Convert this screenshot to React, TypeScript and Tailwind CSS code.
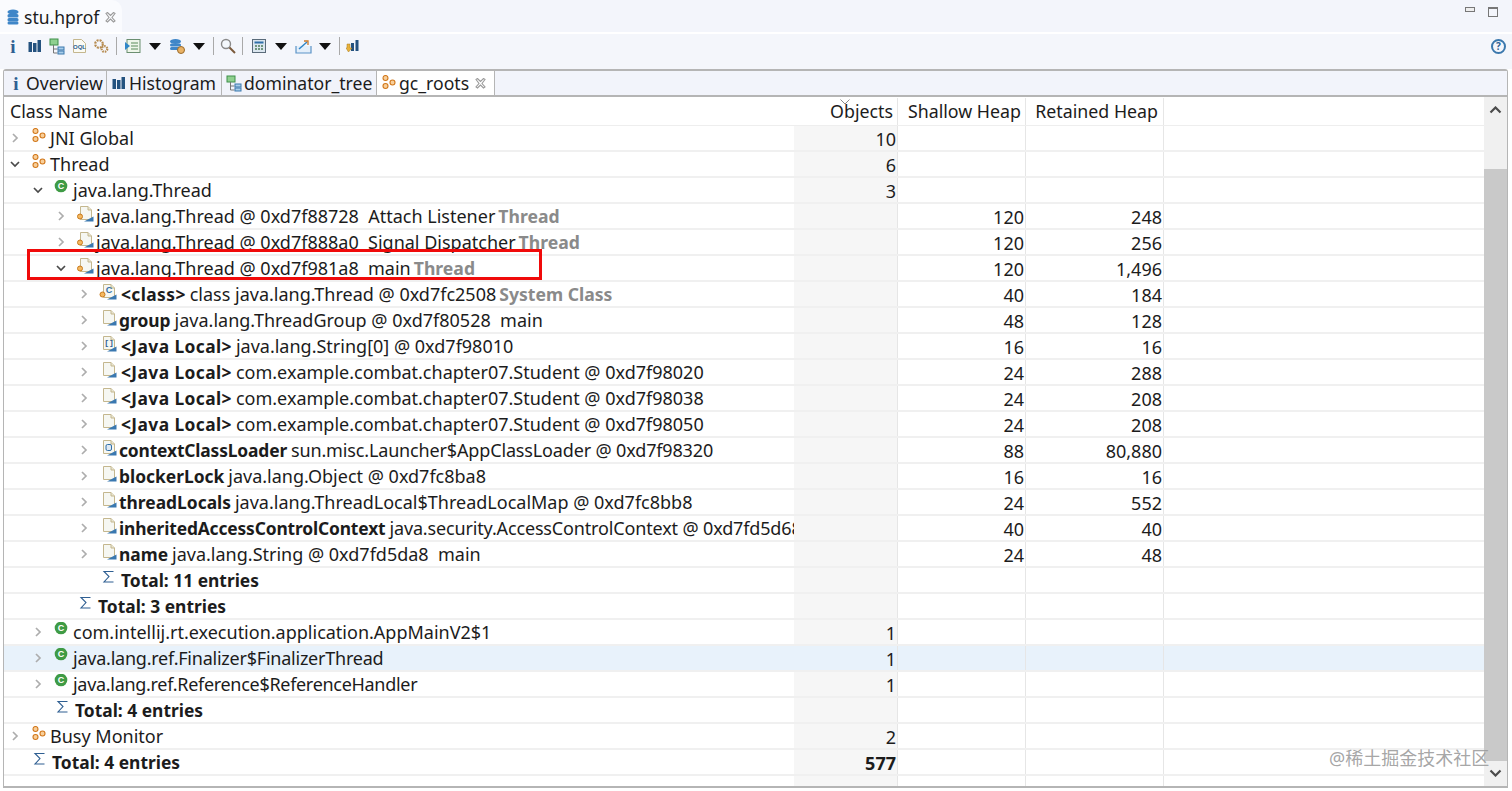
import React from "react";

type IconKind = "roots" | "cls" | "threadObj" | "classObj" | "doc" | "arr" | "loader" | "sum";

type Row = {
  level: number;
  icon: IconKind;
  arrow?: "open" | "closed";
  bold?: string;
  text?: string;
  gray?: string;
  objects?: string;
  shallow?: string;
  retained?: string;
  selected?: boolean;
  total?: boolean;
  track?: string;
};

const INDENT = ["pl-[5px]", "pl-[28px]", "pl-[51px]", "pl-[74px]"];

const rows: Row[] = [
  { level: 0, icon: "roots", arrow: "closed", text: "JNI Global", objects: "10" },
  { level: 0, icon: "roots", arrow: "open", text: "Thread", objects: "6" },
  { level: 1, icon: "cls", arrow: "open", text: "java.lang.Thread", objects: "3" },
  { level: 2, icon: "threadObj", arrow: "closed", text: "java.lang.Thread @ 0xd7f88728  Attach Listener", gray: "Thread", shallow: "120", retained: "248" },
  { level: 2, icon: "threadObj", arrow: "closed", text: "java.lang.Thread @ 0xd7f888a0  Signal Dispatcher", gray: "Thread", shallow: "120", retained: "256" },
  { level: 2, icon: "threadObj", arrow: "open", text: "java.lang.Thread @ 0xd7f981a8  main", gray: "Thread", shallow: "120", retained: "1,496" },
  { level: 3, icon: "classObj", arrow: "closed", bold: "<class>", text: "class java.lang.Thread @ 0xd7fc2508", gray: "System Class", shallow: "40", retained: "184" },
  { level: 3, icon: "doc", arrow: "closed", bold: "group", text: "java.lang.ThreadGroup @ 0xd7f80528  main", shallow: "48", retained: "128" },
  { level: 3, icon: "arr", arrow: "closed", bold: "<Java Local>", text: "java.lang.String[0] @ 0xd7f98010", shallow: "16", retained: "16" },
  { level: 3, icon: "doc", arrow: "closed", bold: "<Java Local>", text: "com.example.combat.chapter07.Student @ 0xd7f98020", shallow: "24", retained: "288" },
  { level: 3, icon: "doc", arrow: "closed", bold: "<Java Local>", text: "com.example.combat.chapter07.Student @ 0xd7f98038", shallow: "24", retained: "208" },
  { level: 3, icon: "doc", arrow: "closed", bold: "<Java Local>", text: "com.example.combat.chapter07.Student @ 0xd7f98050", shallow: "24", retained: "208" },
  { level: 3, icon: "loader", arrow: "closed", bold: "contextClassLoader", text: "sun.misc.Launcher$AppClassLoader @ 0xd7f98320", shallow: "88", retained: "80,880", track: "tracking-[-0.15px]" },
  { level: 3, icon: "doc", arrow: "closed", bold: "blockerLock", text: "java.lang.Object @ 0xd7fc8ba8", shallow: "16", retained: "16" },
  { level: 3, icon: "doc", arrow: "closed", bold: "threadLocals", text: "java.lang.ThreadLocal$ThreadLocalMap @ 0xd7fc8bb8", shallow: "24", retained: "552" },
  { level: 3, icon: "doc", arrow: "closed", bold: "inheritedAccessControlContext", text: "java.security.AccessControlContext @ 0xd7fd5d68", shallow: "40", retained: "40", track: "tracking-[-0.15px]" },
  { level: 3, icon: "doc", arrow: "closed", bold: "name", text: "java.lang.String @ 0xd7fd5da8  main", shallow: "24", retained: "48" },
  { level: 3, icon: "sum", bold: "Total: 11 entries", total: true },
  { level: 2, icon: "sum", bold: "Total: 3 entries", total: true },
  { level: 1, icon: "cls", arrow: "closed", text: "com.intellij.rt.execution.application.AppMainV2$1", objects: "1" },
  { level: 1, icon: "cls", arrow: "closed", text: "java.lang.ref.Finalizer$FinalizerThread", objects: "1", selected: true, track: "tracking-[-0.23px]" },
  { level: 1, icon: "cls", arrow: "closed", text: "java.lang.ref.Reference$ReferenceHandler", objects: "1", track: "tracking-[-0.3px]" },
  { level: 1, icon: "sum", bold: "Total: 4 entries", total: true },
  { level: 0, icon: "roots", arrow: "closed", text: "Busy Monitor", objects: "2" },
  { level: 0, icon: "sum", bold: "Total: 4 entries", objects: "577", total: true },
  {} as Row,
];

function Doc() {
  return (
    <>
      <path d="M4.500 0.500h7.500l3.500 3.500v9.500h-11z" fill="#f6f7f2" stroke="#c4b78e" />
      <path d="M12 0.500v3.500h3.500" fill="#e9e6d2" stroke="#c4b78e" />
      <path d="M8 15.500h9.500v-5z" fill="#3a78b0" />
    </>
  );
}

function Icon({ kind }: { kind: IconKind }) {
  if (kind === "roots") {
    return (
      <svg width="16" height="16" viewBox="0 0 16 16" fill="#f8cf9a" stroke="#d2781c" strokeWidth="1.1">
        <circle cx="4.500" cy="3" r="2.500" />
        <circle cx="4.500" cy="11" r="2.500" />
        <circle cx="11.500" cy="7.500" r="2.500" />
      </svg>
    );
  }
  if (kind === "cls") {
    return (
      <svg width="16" height="16" viewBox="0 0 16 16">
        <circle cx="7" cy="6" r="6.300" fill="#3f9b45" />
        <text x="7" y="9" textAnchor="middle" fontSize="9" fontWeight="700" fill="#fff" fontFamily="Liberation Sans, sans-serif">C</text>
      </svg>
    );
  }
  if (kind === "sum") {
    return (
      <svg width="16" height="16" viewBox="0 0 16 16" fill="none" stroke="#2f5f92" strokeWidth="1.100">
        <path d="M12.500 1.500H3L8 6.500l-5 5.500h9.500" />
      </svg>
    );
  }
  return (
    <svg width="18" height="16" viewBox="0 0 18 16">
      <Doc />
      {kind === "threadObj" && <circle cx="4" cy="10.500" r="2.500" fill="#f4b860" stroke="#c97a1c" />}
      {kind === "classObj" && (
        <>
          <text x="10" y="9" textAnchor="middle" fontSize="9" fontWeight="700" fill="#2f6fa8" fontFamily="Liberation Sans, sans-serif">C</text>
          <circle cx="3.500" cy="10.500" r="2.500" fill="#f4b860" stroke="#c97a1c" />
        </>
      )}
      {kind === "arr" && (
        <text x="10" y="9" textAnchor="middle" fontSize="8" fontWeight="700" fill="#2f5f92" fontFamily="Liberation Mono, monospace">[]</text>
      )}
      {kind === "loader" && <rect x="7" y="4.500" width="5.500" height="6" rx="1.500" fill="#dfe9f3" stroke="#2f6fa8" />}
    </svg>
  );
}

function Chevron({ open }: { open: boolean }) {
  return (
    <svg width="12" height="12" viewBox="0 0 12 12" fill="none" strokeWidth="1.700" stroke={open ? "#4a4a4a" : "#adadad"}>
      {open ? <path d="M2 4l4 4 4-4" /> : <path d="M4 2l4 4-4 4" />}
    </svg>
  );
}

function TreeRow({ row }: { row: Row }) {
  const bg = row.selected ? "bg-[#e8f2fb]" : "";
  const cell = "border-r border-[#e6e6e6] text-right pr-[1px]";
  const angled = row.bold?.startsWith("<");
  return (
    <div className={`flex h-[26px] shrink-0 items-center border-b-2 border-[#f0f0f0] ${bg}`}>
      <div className={`flex h-full w-[790px] shrink-0 items-center overflow-hidden whitespace-nowrap ${INDENT[row.level ?? 0]}`}>
        <span className="flex w-[12px] shrink-0 items-center">
          {row.arrow && <Chevron open={row.arrow === "open"} />}
        </span>
        {row.icon && (
          <span className={`mb-[5px] ml-[7px] flex shrink-0 justify-center ${row.total ? "w-[24px]" : "w-[22px]"}`}>
            <Icon kind={row.icon} />
          </span>
        )}
        <span className={`whitespace-pre ${row.track ?? ""}`}>
          {row.bold && (
            <span className={`mr-[4px] text-[17.4px] font-bold ${angled ? "ml-[2px] tracking-[0.4px]" : ""}`}>{row.bold}</span>
          )}
          {row.text}
          {row.gray && <span className="ml-[3px] text-[17.6px] font-bold text-[#8a8a8a]">{row.gray}</span>}
        </span>
      </div>
      <div className={`h-full w-[104px] shrink-0 ${cell} ${row.selected ? "" : "bg-[#f6f6f6]"} ${row.total ? "font-bold" : ""}`}>{row.objects}</div>
      <div className={`h-full w-[128px] shrink-0 ${cell}`}>{row.shallow}</div>
      <div className={`h-full w-[138px] shrink-0 ${cell}`}>{row.retained}</div>
    </div>
  );
}

function TabIcon({ kind }: { kind: "info" | "bars" | "tree" | "roots" }) {
  if (kind === "info") {
    return <span className="w-[10px] text-center font-['Liberation_Serif',serif] text-[19px] font-bold leading-none text-[#2f5f92]">i</span>;
  }
  if (kind === "bars") return <Bars />;
  if (kind === "tree") return <TreeIcon />;
  return <Icon kind="roots" />;
}

function Bars() {
  return (
    <svg width="14" height="14" viewBox="0 0 14 14" fill="#24527f">
      <rect x="0.500" y="3" width="3.500" height="10" />
      <rect x="5" y="4" width="3.500" height="9" />
      <rect x="9.500" y="1" width="3.500" height="12" />
    </svg>
  );
}

function TreeIcon() {
  return (
    <svg width="16" height="17" viewBox="0 0 16 17">
      <rect x="1" y="1" width="8" height="6" fill="#8fd08f" stroke="#3f8f4a" />
      <path d="M4.500 7v8h4M4.500 11h4" fill="none" stroke="#777" />
      <rect x="9" y="9" width="6" height="3" fill="#a8cdea" stroke="#3b78ad" />
      <rect x="9" y="13" width="6" height="3" fill="#a8cdea" stroke="#3b78ad" />
    </svg>
  );
}

function Caret() {
  return (
    <svg width="12" height="7" viewBox="0 0 12 7" fill="#111">
      <path d="M0 0h12L6 7z" />
    </svg>
  );
}

function Sep() {
  return <span className="block h-[18px] w-px bg-[#a9a9a9]" />;
}

function Slot({ className, children }: { className: string; children?: React.ReactNode }) {
  return <span className={`flex shrink-0 items-center justify-center ${className}`}>{children}</span>;
}

function Toolbar() {
  return (
    <div className="flex h-[35px] shrink-0 items-start bg-[#f4f6fb] pl-[2px] pr-[6px]">
      <div className="flex h-[24px] flex-1 items-center">
        <Slot className="w-[22px]">
          <TabIcon kind="info" />
        </Slot>
        <Slot className="w-[22px]">
          <Bars />
        </Slot>
        <Slot className="w-[22px]">
          <TreeIcon />
        </Slot>
        <Slot className="w-[22px]">
          <svg width="15" height="16" viewBox="0 0 15 16">
            <path d="M1.500 1.500h8l4 4v9h-12z" fill="#fbfbf4" stroke="#c4b78e" />
            <text x="7.500" y="11" textAnchor="middle" fontSize="6" fontWeight="700" fill="#2f5f92" fontFamily="Liberation Sans, sans-serif">OQL</text>
          </svg>
        </Slot>
        <Slot className="w-[22px]">
          <svg width="16" height="16" viewBox="0 0 16 16" fill="none" stroke="#b58a4e">
            <circle cx="6" cy="6" r="3.800" strokeDasharray="2 1" strokeWidth="2.200" />
            <circle cx="11.500" cy="11" r="2.800" strokeDasharray="1.500 1" strokeWidth="2.200" />
          </svg>
        </Slot>
        <Slot className="w-[8px]">
          <Sep />
        </Slot>
        <Slot className="w-[24px]">
          <svg width="17" height="16" viewBox="0 0 17 16">
            <rect x="3" y="1.500" width="13" height="13" fill="#eef6ea" stroke="#6b8f71" />
            <path d="M7 5h7M7 8h7M7 11h7" stroke="#5b8c5a" />
            <path d="M1 4l5 4-5 4z" fill="#2f86c8" />
          </svg>
        </Slot>
        <Slot className="w-[22px]">
          <Caret />
        </Slot>
        <Slot className="w-[22px]">
          <svg width="17" height="17" viewBox="0 0 17 17">
            <ellipse cx="6.500" cy="3.500" rx="5.500" ry="2.500" fill="#3f86c8" />
            <rect x="1" y="5.500" width="11" height="3" rx="1.500" fill="#3f86c8" />
            <rect x="1" y="9" width="11" height="3" rx="1.500" fill="#3f86c8" />
            <circle cx="12" cy="12" r="3.500" fill="#e9b265" stroke="#9a6a2a" />
          </svg>
        </Slot>
        <Slot className="w-[22px]">
          <Caret />
        </Slot>
        <Slot className="w-[6px]">
          <Sep />
        </Slot>
        <Slot className="w-[24px]">
          <svg width="16" height="16" viewBox="0 0 16 16" fill="none">
            <circle cx="6" cy="6" r="4.500" stroke="#8a8a8a" strokeWidth="1.400" fill="#f4f8fc" />
            <path d="M9.500 9.500 15 15" stroke="#7a5a3a" strokeWidth="2" />
          </svg>
        </Slot>
        <Slot className="w-[4px]">
          <Sep />
        </Slot>
        <Slot className="w-[30px]">
          <svg width="14" height="14" viewBox="0 0 14 14">
            <rect x=".5" y=".5" width="13" height="13" fill="#dbe6ef" stroke="#5a6b7a" />
            <rect x="2.500" y="2.500" width="9" height="2" fill="#2f6fa8" />
            <path d="M3 7h2M6 7h2M9 7h2M3 10h2M6 10h2M9 10h2" stroke="#4d7c5a" strokeWidth="1.500" />
          </svg>
        </Slot>
        <Slot className="w-[14px]">
          <Caret />
        </Slot>
        <Slot className="w-[30px]">
          <svg width="17" height="15" viewBox="0 0 17 15" fill="none">
            <path d="M1 7v7h15V7" stroke="#5b93c7" strokeWidth="1.200" fill="#e4effa" />
            <path d="M4 10 12 3" stroke="#2f86c8" strokeWidth="1.500" />
            <path d="M9 2h4v4" stroke="#c9792a" strokeWidth="1.300" />
          </svg>
        </Slot>
        <Slot className="w-[14px]">
          <Caret />
        </Slot>
        <Slot className="w-[14px]">
          <Sep />
        </Slot>
        <Slot className="w-[16px]">
          <svg width="16" height="16" viewBox="0 0 16 16">
            <rect x="5" y="5" width="3" height="8" fill="#24527f" />
            <rect x="9.500" y="2" width="3" height="11" fill="#24527f" />
            <path d="M1 6h3v4h2l-3.500 4L0 10h1z" fill="#e8b23c" stroke="#a97a1c" strokeWidth=".5" />
          </svg>
        </Slot>
        <span className="ml-auto flex h-[15px] w-[15px] items-center justify-center rounded-full border-2 border-[#3b78ad] text-[10px] font-bold leading-none text-[#2f5f92]">?</span>
      </div>
    </div>
  );
}

function Tab({ label, icon, width, active }: { label: string; icon: "info" | "bars" | "tree" | "roots"; width: string; active?: boolean }) {
  return (
    <div className={`flex h-full shrink-0 items-center border-r border-[#b5b5b5] pl-[3px] ${width} ${active ? "bg-white" : "bg-[#f1f3fa]"}`}>
      <span className="flex w-[18px] shrink-0 justify-center">
        <TabIcon kind={icon} />
      </span>
      <span className="pl-[1px]">{label}</span>
      {active && <CloseX />}
    </div>
  );
}

function CloseX() {
  return (
    <svg className="ml-[6px]" width="11" height="11" viewBox="0 0 11 11" fill="none" stroke="#9a9a9a" strokeWidth="1.100">
      <path d="M1 1.500 2.500 0.500 5.500 3.500 8.500 0.500 10 1.500 7 5.500 10 9 8.500 10 5.500 7 2.500 10 1 9 4 5.500z" />
    </svg>
  );
}

export default function App() {
  return (
    <div className="relative flex h-[791px] w-[1512px] flex-col overflow-hidden bg-white font-['Noto_Sans',sans-serif] text-[18px] leading-[26px] text-[#1c1c1c]">
      {/* editor title */}
      <div className="flex h-[32px] shrink-0 items-start justify-between bg-[#f3f5fb]">
        <div className="flex h-full w-[122px] items-center rounded-tr-[10px] bg-[#fafbfe] pl-[7px] pt-[2px] text-[17.5px]">
          <svg width="12" height="16" viewBox="0 0 12 16" fill="#3f86c8">
            <ellipse cx="6" cy="3" rx="5.500" ry="2.500" />
            <rect x=".5" y="5" width="11" height="3.500" rx="1.500" />
            <rect x=".5" y="9" width="11" height="3.500" rx="1.500" />
            <rect x=".5" y="12.500" width="11" height="3" rx="1.500" />
          </svg>
          <span className="ml-[5px]">stu.hprof</span>
          <CloseX />
        </div>
        <div className="flex items-start gap-[13px] pr-[14px] pt-[7px]">
          <span className="block h-[5px] w-[10px] border border-[#777] bg-[#eee]" />
          <span className="block h-[10px] w-[10px] border border-[#777] border-t-2" />
        </div>
      </div>

      <div className="h-[2px] shrink-0" />
      <Toolbar />

      {/* pane folder */}
      <div className="ml-[3px] mr-[4px] flex min-h-0 flex-1 flex-col rounded-t-[3px] border-x border-b-2 border-t-2 border-[#b5b5b5]">
        <div className="flex h-[26px] shrink-0 border-b-2 border-[#b5b5b5] bg-[#f2f4fb] text-[17.6px]">
          <Tab label="Overview" icon="info" width="w-[103px]" />
          <Tab label="Histogram" icon="bars" width="w-[115px]" />
          <Tab label="dominator_tree" icon="tree" width="w-[155px]" />
          <Tab label="gc_roots" icon="roots" width="w-[118px]" active />
        </div>

        <div className="flex min-h-0 flex-1">
          <div className="flex min-w-0 flex-1 flex-col overflow-hidden">
            {/* column headers */}
            <div className="flex h-[29px] shrink-0 border-b border-[#eeeeee] pt-[1px] text-[17.8px]">
              <div className="w-[790px] shrink-0 pl-[6px]">Class Name</div>
              <div className="relative h-full w-[104px] shrink-0 border-r border-[#e6e6e6] pr-[4px] text-right">
                Objects
                <svg className="absolute left-[46px] top-[1px]" width="10" height="6" viewBox="0 0 10 6" fill="none" stroke="#8a8a8a">
                  <path d="M0.500 0.500 5 5l4.500-4.500" />
                </svg>
              </div>
              <div className="h-full w-[128px] shrink-0 border-r border-[#e6e6e6] pr-[4px] text-right">Shallow Heap</div>
              <div className="h-full w-[138px] shrink-0 border-r border-[#e6e6e6] pr-[5px] text-right">Retained Heap</div>
            </div>
            {rows.map((row, i) => (
              <TreeRow key={i} row={row} />
            ))}
          </div>

          {/* scrollbar */}
          <div className="flex w-[23px] shrink-0 flex-col bg-[#f0f0f0]">
            <div className="flex h-[72px] shrink-0 justify-center pt-[9px]">
              <svg width="13" height="8" viewBox="0 0 13 8" fill="none" stroke="#4a4a4a" strokeWidth="2.200">
                <path d="M1.500 6.500 6.500 1.500l5 5" />
              </svg>
            </div>
            <div className="min-h-0 flex-1 bg-[#c9c9c9]" />
            <div className="flex h-[25px] shrink-0 justify-center pt-[8px]">
              <svg width="13" height="8" viewBox="0 0 13 8" fill="none" stroke="#4a4a4a" strokeWidth="2.200">
                <path d="M1.500 1.500 6.500 6.500l5-5" />
              </svg>
            </div>
          </div>
        </div>
      </div>

      <div className="h-[3px] shrink-0" />

      {/* red annotation */}
      <div className="absolute left-[27px] top-[249px] h-[31px] w-[515px] border-[3px] border-[#f00a0a]" />

      {/* watermark */}
      <div className="absolute left-[1329px] top-[746px] font-['Noto_Sans','Noto_Sans_CJK_SC',sans-serif] text-[18px] leading-[24px] text-[#9b9b9b]/90">
        @稀土掘金技术社区
      </div>
    </div>
  );
}
